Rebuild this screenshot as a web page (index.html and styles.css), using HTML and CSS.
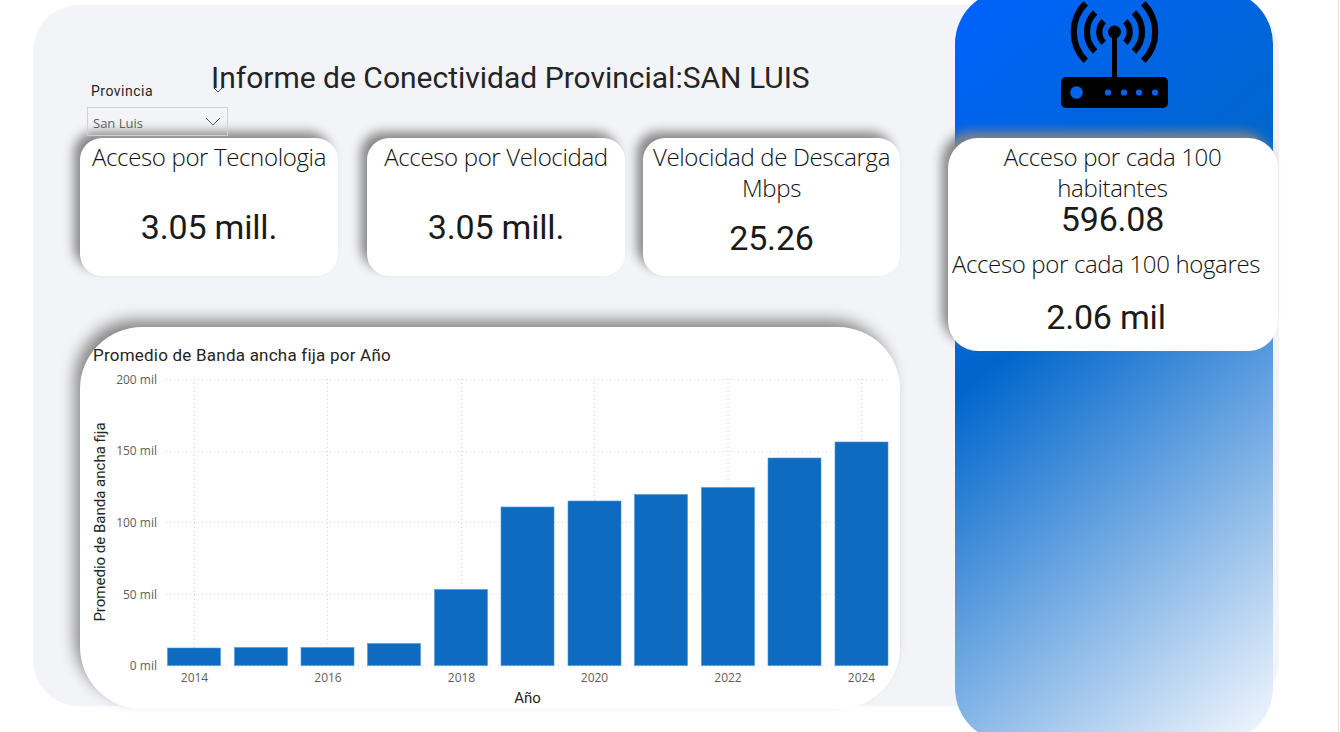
FILE: index.html
```html
<!DOCTYPE html>
<html lang="es">
<head>
    <meta charset="UTF-8">
    <meta name="viewport" content="width=device-width, initial-scale=1.0">
    <title>Informe de Conectividad Provincial</title>
    <link rel="stylesheet" href="styles.css">
</head>
<body>
    <div class="page">
        <main class="panel">
            <header class="header">
                <h1 class="report-title">Informe de Conectividad Provincial:SAN LUIS</h1>
                <div class="slicer">
                    <div class="slicer-label">Provincia</div>
                    <div class="slicer-box">
                        <span>San Luis</span>
                        <svg class="slicer-arrow" width="16" height="9" viewBox="0 0 16 9"><path d="M1 1l7 7 7-7" fill="none" stroke="#5f6368" stroke-width="1"/></svg>
                    </div>
                </div>
                <svg class="header-chevron" width="10" height="6" viewBox="0 0 10 6"><path d="M1 1l4 4 4-4" fill="none" stroke="#444" stroke-width="1"/></svg>
            </header>

            <section class="cards">
                <div class="card">
                    <div class="card-label">Acceso por Tecnologia</div>
                    <div class="card-value value-low">3.05 mill.</div>
                </div>
                <div class="card">
                    <div class="card-label">Acceso por Velocidad</div>
                    <div class="card-value value-low">3.05 mill.</div>
                </div>
                <div class="card card-last">
                    <div class="card-label">Velocidad de Descarga Mbps</div>
                    <div class="card-value value-wrapped">25.26</div>
                </div>
            </section>

            <section class="chart-card">
                <h2 class="chart-title">Promedio de Banda ancha fija por Año</h2>
                <svg class="chart" width="820" height="345" viewBox="80 364 820 345">
                    <g class="grid">
                        <line x1="166" y1="379.5" x2="888" y2="379.5"/>
                        <line x1="166" y1="451.5" x2="888" y2="451.5"/>
                        <line x1="166" y1="522.5" x2="888" y2="522.5"/>
                        <line x1="166" y1="594.5" x2="888" y2="594.5"/>
                        <line x1="166" y1="666" x2="888" y2="666"/>
                        <line x1="194.5" y1="379" x2="194.5" y2="648"/>
                        <line x1="327.5" y1="379" x2="327.5" y2="648"/>
                        <line x1="461.5" y1="379" x2="461.5" y2="590"/>
                        <line x1="594.5" y1="379" x2="594.5" y2="501"/>
                        <line x1="728" y1="379" x2="728" y2="488"/>
                        <line x1="861.5" y1="379" x2="861.5" y2="442"/>
                    </g>
                    <g class="bars">
                        <rect x="167.5" y="648" width="53" height="17.5"/>
                        <rect x="234.5" y="647.5" width="53" height="18"/>
                        <rect x="301" y="647.5" width="53" height="18"/>
                        <rect x="367.5" y="643.5" width="53" height="22"/>
                        <rect x="434.5" y="589.5" width="53" height="76"/>
                        <rect x="501" y="507" width="53" height="158.5"/>
                        <rect x="568" y="501" width="53" height="164.5"/>
                        <rect x="634.5" y="494.5" width="53" height="171"/>
                        <rect x="701.5" y="487.5" width="53" height="178"/>
                        <rect x="768" y="458" width="53" height="207.5"/>
                        <rect x="835" y="442" width="53" height="223.5"/>
                    </g>
                    <g class="axis-y">
                        <text x="157" y="384">200 mil</text>
                        <text x="157" y="455">150 mil</text>
                        <text x="157" y="527">100 mil</text>
                        <text x="157" y="599">50 mil</text>
                        <text x="157" y="670">0 mil</text>
                    </g>
                    <g class="axis-x">
                        <text x="194.5" y="682">2014</text>
                        <text x="328" y="682">2016</text>
                        <text x="461.5" y="682">2018</text>
                        <text x="594.5" y="682">2020</text>
                        <text x="728" y="682">2022</text>
                        <text x="861.5" y="682">2024</text>
                    </g>
                    <text class="axis-title" x="527.5" y="703">Año</text>
                    <text class="axis-title" transform="translate(105 522) rotate(-90)">Promedio de Banda ancha fija</text>
                </svg>
            </section>
        </main>

        <aside class="side">
            <svg class="router" width="110" height="110" viewBox="0 0 110 110">
                <g fill="none" stroke="#000" stroke-width="6.2">
                    <path d="M43.75 21.25a15.2 15.2 0 0 0 0 21.5"/>
                    <path d="M65.25 21.25a15.2 15.2 0 0 1 0 21.5"/>
                    <path d="M35.05 12.55a27.5 27.5 0 0 0 0 38.9"/>
                    <path d="M73.95 12.55a27.5 27.5 0 0 1 0 38.9"/>
                    <path d="M25.7 3.2a40.7 40.7 0 0 0 0 57.6"/>
                    <path d="M83.3 3.2a40.7 40.7 0 0 1 0 57.6"/>
                </g>
                <circle cx="54.5" cy="32" r="6.5"/>
                <rect x="52" y="32" width="5" height="46"/>
                <rect x="1" y="77" width="107" height="31" rx="5"/>
                <g fill="#0064f0">
                    <circle cx="16.5" cy="92.5" r="6.3"/>
                    <circle cx="48" cy="92.5" r="3.1"/>
                    <circle cx="64" cy="92.5" r="3.1"/>
                    <circle cx="79" cy="92.5" r="3.1"/>
                    <circle cx="95" cy="92.5" r="3.1"/>
                </g>
            </svg>
            <div class="side-card">
                <div class="side-block block-top">
                    <div class="card-label">Acceso por cada 100 habitantes</div>
                    <div class="card-value">596.08</div>
                </div>
                <div class="side-block block-bottom">
                    <div class="card-label">Acceso por cada 100 hogares</div>
                    <div class="card-value value-bottom">2.06 mil</div>
                </div>
            </div>
        </aside>
        <div class="edge"></div>
    </div>
</body>
</html>
```

FILE: styles.css
```css
body {
    margin: 0;
    background-color: #fff;
    font-family: "Open Sans", Arial, sans-serif;
    color: #252423;
    overflow: hidden;
}
.page {
    position: relative;
    height: 732px;
    overflow: hidden;
    padding-top: 5px;
    box-sizing: border-box;
}
.edge {
    position: absolute;
    right: 1px;
    top: 0;
    bottom: 0;
    width: 1px;
    background-color: #e1e1e1;
}
.panel {
    margin: 0 61px 0 33px;
    height: 701px;
    padding: 0 0 0 47px;
    background-color: #f3f4f8;
    border-radius: 46px;
    box-sizing: border-box;
}

/* title + slicer share one grid cell, the slicer sits over the title */
.header {
    display: grid;
    height: 133px;
    position: relative;
}
.report-title {
    grid-area: 1 / 1;
    margin: 55px 0 0 131px;
    font-family: Roboto, Arial, sans-serif;
    font-size: 30px;
    line-height: 36px;
    font-weight: 400;
    white-space: nowrap;
}
.slicer {
    grid-area: 1 / 1;
    margin: 77px 0 0 7px;
    width: 141px;
    position: relative;
}
.slicer-label {
    font-family: Roboto, Arial, sans-serif;
    font-size: 14px;
    line-height: 18px;
    padding-left: 4px;
    letter-spacing: 0.5px;
}
.slicer-box {
    display: flex;
    justify-content: space-between;
    align-items: center;
    height: 29px;
    margin-top: 7px;
    padding: 3px 6px 0 5px;
    border: 1px solid #d0d1d4;
    box-sizing: border-box;
    font-size: 13px;
    color: #605e5c;
}
.slicer-arrow {
    margin-top: -3px;
}
.header-chevron {
    position: absolute;
    left: 133px;
    top: 82px;
}

.cards {
    display: grid;
    grid-template-columns: 258px 258px 257px;
    column-gap: 29px;
}
.card {
    height: 138px;
    background-color: #fff;
    border-radius: 22px;
    box-shadow: -7px -7px 11px -1px #858585;
    text-align: center;
    padding-top: 3px;
    box-sizing: border-box;
}
.card-last {
    margin: 0 11px 0 -11px;
}
.card-label {
    font-size: 24px;
    line-height: 31px;
    font-weight: 300;
    letter-spacing: -0.35px;
    color: #111;
}
.card-value {
    font-family: Roboto, Arial, sans-serif;
    font-size: 34px;
    line-height: 40px;
    color: #1a1a1a;
    letter-spacing: -0.2px;
}
.value-low {
    margin-top: 35px;
}
.value-wrapped {
    margin-top: 15px;
}

.chart-card {
    margin-top: 51px;
    width: 820px;
    height: 382px;
    background-color: #fff;
    border-radius: 62px;
    box-shadow: -7px -9px 15px -2px #858585;
    position: relative;
}
.chart-title {
    margin: 0;
    padding: 19px 0 0 13px;
    font-family: Roboto, Arial, sans-serif;
    font-size: 17px;
    line-height: 18px;
    font-weight: 400;
    letter-spacing: 0.22px;
}
.chart {
    display: block;
}
.grid line {
    stroke: #d2d2d2;
    stroke-width: 1;
    stroke-dasharray: 1 3;
}
.bars rect {
    fill: #0f6bc0;
    stroke: #4f93d8;
    stroke-width: 0.6;
}
.axis-y text,
.axis-x text {
    font-family: "Open Sans", Arial, sans-serif;
    font-size: 12px;
    fill: #605e5c;
}
.axis-y text {
    text-anchor: end;
}
.axis-x text {
    text-anchor: middle;
}
.axis-title {
    font-family: Roboto, Arial, sans-serif;
    font-size: 15px;
    fill: #252423;
    text-anchor: middle;
}

.side {
    position: absolute;
    left: 955px;
    top: -10px;
    width: 318px;
    height: 752px;
    padding-top: 10px;
    box-sizing: border-box;
    border-radius: 54px;
    background: linear-gradient(140deg, #0062ff 0%, #0066cc 40%, #f6f9fe 100%);
}
.router {
    display: block;
    margin-left: 105px;
}
.side-card {
    width: 330px;
    height: 213px;
    margin: 28px 0 0 -7px;
    background-color: #fff;
    border-radius: 30px;
    box-shadow: -7px -7px 11px -1px #858585;
    position: relative;
}
.side-block {
    text-align: center;
}
.block-top {
    padding: 3px 33px 0 32px;
}
.block-top .card-value {
    line-height: 32px;
}
.block-bottom {
    padding: 0 14px 0 0;
    white-space: nowrap;
}
.block-bottom .card-label {
    margin-top: 13px;
}
.value-bottom {
    margin-top: 18px;
}
```
